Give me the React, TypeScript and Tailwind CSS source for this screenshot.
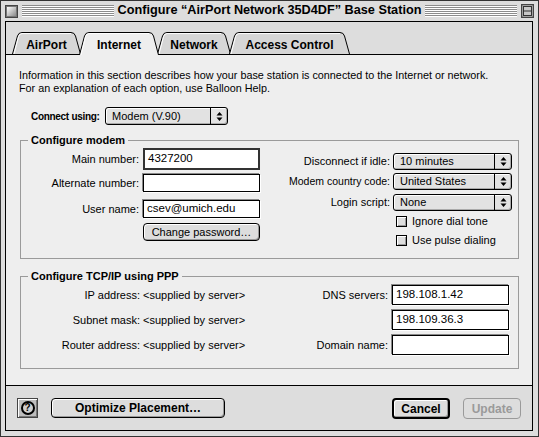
import type { ReactNode } from "react";

function Stripes() {
  return (
    <div className="flex flex-1 flex-col">
      {[0, 1, 2, 3, 4, 5].map((i) => (
        <div key={i} className="h-[2px] border-t border-[#8c8c8c] bg-white" />
      ))}
    </div>
  );
}

function CloseBox() {
  return (
    <svg width="13" height="13" viewBox="0 0 13 13">
      <defs>
        <linearGradient id="cb" x1="0" y1="0" x2="1" y2="1">
          <stop offset="0" stopColor="#ffffff" />
          <stop offset="1" stopColor="#8a8a8a" />
        </linearGradient>
      </defs>
      <rect x="0.5" y="0.5" width="12" height="12" fill="#777" stroke="#444" />
      <rect x="2" y="2" width="9" height="9" fill="url(#cb)" />
    </svg>
  );
}

function ShadeBox() {
  return (
    <svg width="13" height="14" viewBox="0 0 13 14">
      <rect x="0.5" y="0.5" width="12" height="13" fill="#777" stroke="#444" />
      <rect x="2" y="2" width="9" height="10" fill="#c8c8c8" stroke="#fff" strokeWidth="0.6" />
      <rect x="2.5" y="2.5" width="8" height="9" fill="none" stroke="#333" />
      <line x1="2.5" y1="7" x2="10.5" y2="7" stroke="#333" />
    </svg>
  );
}

function Tab({ label, w, active }: { label: string; w: number; active?: boolean }) {
  const h = active ? 23 : 22;
  const d = `M0.5 ${h} L5.5 4 Q6.5 0.5 10 0.5 L${w - 10} 0.5 Q${w - 6.5} 0.5 ${w - 5.5} 4 L${w - 0.5} ${h}`;
  return (
    <div
      className={
        active
          ? "relative z-10 -mb-px -ml-[2px] flex h-[23px] items-start justify-center pt-[4px] text-[12px] font-bold"
          : "relative -ml-[2px] flex h-[22px] items-start justify-center pt-[4px] text-[12px] font-bold first:ml-0"
      }
      style={{ width: w }}
    >
      <svg className="absolute inset-0" width={w} height={h}>
        <path d={d} fill={active ? "#eeeeee" : "#d6d6d6"} stroke="#000" />
        <path
          d={`M2 ${h} L6.6 4.5 Q7.5 1.6 10 1.6 L${w - 10} 1.6`}
          fill="none"
          stroke="#fff"
        />
      </svg>
      <span className="relative">{label}</span>
    </div>
  );
}

function Arrows() {
  return (
    <svg width="7" height="11" viewBox="0 0 7 11">
      <path d="M3.5 1 L6.5 4.5 L0.5 4.5 Z M0.5 6.5 L6.5 6.5 L3.5 10 Z" fill="#000" />
    </svg>
  );
}

function Popup({ value, w, h = 17 }: { value: string; w: number; h?: number }) {
  return (
    <div
      className="flex rounded-[3px] border border-black bg-[#e2e2e2] shadow-[inset_1px_1px_0_#fff,inset_-1px_-1px_0_#aaa]"
      style={{ width: w, height: h }}
    >
      <div className="flex flex-1 items-center pl-[6px] text-[11px]">{value}</div>
      <div className="flex w-[17px] items-center justify-center border-l border-black">
        <Arrows />
      </div>
    </div>
  );
}

function Field({ value = "", w = 117, h = 18, focused }: { value?: string; w?: number; h?: number; focused?: boolean }) {
  return (
    <div
      className={
        focused
          ? "flex items-center border-2 border-[#333] bg-white pl-[3px] text-[11.5px]"
          : "flex items-center border border-black bg-white pl-[3px] text-[11.5px] shadow-[-1px_-1px_0_#888,1px_1px_0_#fff]"
      }
      style={{ width: w, height: h }}
    >
      {value}
    </div>
  );
}

function Button({ children, w, h = 20, kind }: { children: ReactNode; w: number; h?: number; kind?: "cancel" | "disabled" | "plain" }) {
  const base = "flex items-center justify-center rounded-[4px] bg-[#dddddd] ";
  const cls =
    kind === "cancel"
      ? base + "border-2 border-black text-[12px] font-bold shadow-[inset_1px_1px_0_#fff,inset_-1px_-1px_0_#999]"
      : kind === "disabled"
        ? base + "border border-[#9a9a9a] text-[12px] font-bold text-[#9a9a9a]"
        : kind === "plain"
          ? base + "border border-black text-[11px] shadow-[inset_1px_1px_0_#fff,inset_-1px_-1px_0_#999]"
          : base + "border border-black text-[12px] font-bold shadow-[inset_1px_1px_0_#fff,inset_-1px_-1px_0_#999]";
  return (
    <div className={cls} style={{ width: w, height: h }}>
      {children}
    </div>
  );
}

function Checkbox({ label }: { label: string }) {
  return (
    <div className="flex h-[19px] items-center pl-[3px]">
      <div className="h-[11px] w-[11px] border border-black bg-[#dddddd] shadow-[inset_1px_1px_0_#fff,inset_-1px_-1px_0_#999]" />
      <span className="ml-[5px] text-[11px]">{label}</span>
    </div>
  );
}

function HelpButton() {
  return (
    <div className="flex h-[20px] w-[21px] items-center justify-center border border-[#444] bg-[#bdbdbd] shadow-[inset_1px_1px_0_#fff,inset_-1px_-1px_0_#777]">
      <div className="flex h-[14px] w-[14px] items-center justify-center rounded-full border-2 border-black bg-[#cfcfcf] text-[10px] font-bold leading-none">
        ?
      </div>
    </div>
  );
}

export default function App() {
  return (
    <div className="h-[437px] w-[539px] border border-[#333] bg-[#dddddd] font-['Liberation_Sans',Arial,sans-serif] text-black">
      {/* title bar */}
      <div className="flex h-[20px] items-center px-[4px]">
        <CloseBox />
        <div className="ml-[4px] flex flex-1">
          <Stripes />
        </div>
        <div className="px-[4px] text-[12.7px] font-bold">Configure “AirPort Network 35D4DF” Base Station</div>
        <div className="mr-[4px] flex flex-1">
          <Stripes />
        </div>
        <ShadeBox />
      </div>

      <div className="ml-[4px] flex h-[410px] w-[528px] flex-col border border-black bg-[#dddddd]">
        {/* tabs */}
        <div className="flex h-[32px] items-end pl-[6px]">
          <Tab label="AirPort" w={69} />
          <Tab label="Internet" w={80} active />
          <Tab label="Network" w={74} />
          <Tab label="Access Control" w={121} />
        </div>

        {/* panel */}
        <div className="h-[332px] border-y border-black bg-[#eeeeee]">
          <div className="pl-[13px] pt-[14px] text-[10.8px] leading-[13px]">
            <div>Information in this section describes how your base station is connected to the Internet or network.</div>
            <div>For an explanation of each option, use Balloon Help.</div>
          </div>

          <div className="mt-[12px] flex items-center pl-[25px]">
            <div className="w-[74px] text-[10px] font-bold tracking-[-0.3px]">Connect using:</div>
            <Popup value="Modem (V.90)" w={123} h={18} />
          </div>

          <fieldset className="ml-[14px] mt-[8px] w-[499px] border border-[#9a9a9a] pb-[8px]">
            <legend className="ml-[7px] px-[3px] text-[11px] font-bold leading-[14px]">Configure modem</legend>
            <div className="flex">
              <div className="flex flex-col">
                <div className="mt-[1px] flex items-center">
                  <div className="w-[122px] pr-[4px] text-right text-[11px]">Main number:</div>
                  <Field value="4327200" h={22} focused />
                </div>
                <div className="mt-[4px] flex items-center">
                  <div className="w-[122px] pr-[4px] text-right text-[11px]">Alternate number:</div>
                  <Field />
                </div>
                <div className="mt-[8px] flex items-center">
                  <div className="w-[122px] pr-[4px] text-right text-[11px]">User name:</div>
                  <Field value="csev@umich.edu" />
                </div>
                <div className="ml-[122px] mt-[5px]">
                  <Button w={117} h={18} kind="plain">
                    Change password…
                  </Button>
                </div>
              </div>

              <div className="flex flex-col pt-[6px]">
                <div className="flex items-center">
                  <div className="w-[133px] pr-[3px] text-right text-[11px]">Disconnect if idle:</div>
                  <Popup value="10 minutes" w={119} />
                </div>
                <div className="mt-[3px] flex items-center">
                  <div className="w-[133px] pr-[3px] text-right text-[10.5px]">Modem country code:</div>
                  <Popup value="United States" w={119} />
                </div>
                <div className="mt-[4px] flex items-center">
                  <div className="w-[133px] pr-[3px] text-right text-[11px]">Login script:</div>
                  <Popup value="None" w={119} />
                </div>
                <div className="ml-[133px] mt-[1px]">
                  <Checkbox label="Ignore dial tone" />
                  <Checkbox label="Use pulse dialing" />
                </div>
              </div>
            </div>
          </fieldset>

          <fieldset className="ml-[14px] mt-[10px] w-[499px] border border-[#9a9a9a] pb-[13px]">
            <legend className="ml-[7px] px-[3px] text-[11px] font-bold leading-[14px]">Configure TCP/IP using PPP</legend>
            <div className="mt-[2px] grid grid-cols-[122px_130px_119px_117px] grid-rows-[20px_20px_20px] items-center gap-y-[5px] text-[11px]">
              <div className="pr-[3px] text-right">IP address:</div>
              <div>&lt;supplied by server&gt;</div>
              <div className="pr-[4px] text-right">DNS servers:</div>
              <Field value="198.108.1.42" h={20} />

              <div className="pr-[3px] text-right">Subnet mask:</div>
              <div>&lt;supplied by server&gt;</div>
              <div />
              <Field value="198.109.36.3" h={20} />

              <div className="pr-[3px] text-right">Router address:</div>
              <div>&lt;supplied by server&gt;</div>
              <div className="pr-[4px] text-right">Domain name:</div>
              <Field h={20} />
            </div>
          </fieldset>
        </div>

        {/* bottom bar */}
        <div className="flex items-start pl-[11px] pr-[11px] pt-[12px]">
          <HelpButton />
          <div className="ml-[13px]">
            <Button w={174}>Optimize Placement…</Button>
          </div>
          <div className="flex-1" />
          <Button w={58} h={21} kind="cancel">
            Cancel
          </Button>
          <div className="ml-[13px]">
            <Button w={58} h={21} kind="disabled">
              Update
            </Button>
          </div>
        </div>
      </div>
    </div>
  );
}
